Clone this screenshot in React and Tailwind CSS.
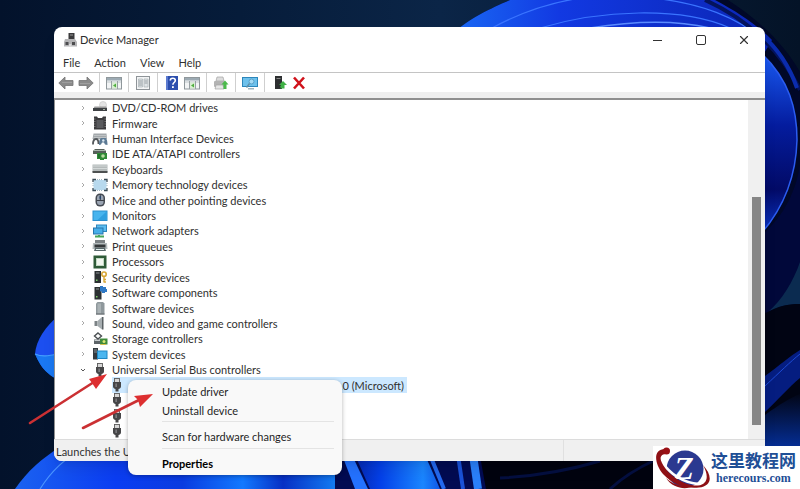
import { X } from 'lucide-react';

function cx(...classes) {
  return classes.filter(Boolean).join(' ');
}

function Svg({ w = 16, h = 14, className, children }) {
  return (
    <svg
      width={w}
      height={h}
      viewBox={`0 0 ${w} ${h}`}
      className={cx('shrink-0', className)}
      aria-hidden="true"
    >
      {children}
    </svg>
  );
}

/* ---------- tree icons ---------- */

const DiscIcon = () => (
  <Svg>
    <circle cx="11" cy="4" r="3.5" fill="#e4e4e4" stroke="#c4c4c4" strokeWidth=".6" />
    <path d="M2.5 5.500h12l.5 2H1.5z" fill="#9a9a9a" />
    <rect x="1" y="7" width="14" height="3" fill="#3e4144" />
    <rect x="11" y="8" width="2" height="1" fill="#a9b5a6" />
  </Svg>
);

const FirmwareIcon = () => (
  <Svg>
    <path d="M2 .5h3L6 2h4l1-1.500h3v13H2z" fill="#3b3b3d" />
    <rect x="4.500" y="4" width="7" height="8" fill="#5a5b5e" />
    <path d="M2 3h1.500M2 5.500h1.500M2 8h1.500M2 10.500h1.500M12.500 3H14M12.500 5.500H14M12.500 8H14M12.500 10.500H14" stroke="#8a8a8a" strokeWidth=".8" />
  </Svg>
);

const HidIcon = () => (
  <Svg>
    <path d="M1.500 1.500h13l.5 5.500H.5z" fill="#a3a8ab" />
    <path d="M2 3.500h12M1.500 5.500h13" stroke="#c6cacc" strokeWidth=".8" />
    <path d="M1 12.500c0-4 1-5.500 3-5.500s2.500 2 2.500 5" fill="none" stroke="#54585c" strokeWidth="1.800" />
    <path d="M7 13c0-4.500 1-7 2.500-7h3.500c1.500 0 2.500 2.500 2.500 7l-2.500-.5-1-2h-2l-1 2z" fill="#5c7a94" />
    <circle cx="11.300" cy="8.500" r="1.200" fill="#dbe8f2" />
  </Svg>
);

const IdeIcon = () => (
  <Svg>
    <path d="M1 4l2-2h9l2 2v3H1z" fill="#56605a" />
    <path d="M2 3.500h11" stroke="#a9b5ac" strokeWidth="1" />
    <path d="M5 6h10v6h-3v1H8v-1H5z" fill="#2f8a36" />
    <circle cx="11" cy="9" r="1.800" fill="#b9dba2" />
    <path d="M6 8h2M6 10h2" stroke="#175c22" strokeWidth="1" />
  </Svg>
);

const KeyboardIcon = () => (
  <Svg>
    <rect x=".5" y="2.500" width="15" height="7.500" fill="#b4baba" />
    <path d="M1 4h14M1 6.500h14" stroke="#d3d8d8" strokeWidth="1" />
    <rect x=".5" y="9" width="15" height="2" fill="#4d5050" />
  </Svg>
);

const MemoryIcon = () => (
  <Svg>
    <rect x="1.500" y="2" width="13" height="10" fill="#b7d9ee" />
    <path d="M1 4V1.500h3M12 1.500h3V4M15 10v2.500h-3M4 12.500H1V10" fill="none" stroke="#3c4d58" strokeWidth="1.300" />
    <path d="M5 1.500h6M5 12.500h6M1 5v4M15 5v4" stroke="#8aa7b8" strokeWidth=".8" strokeDasharray="1 1" />
  </Svg>
);

const MouseIcon = () => (
  <Svg>
    <rect x="3.500" y=".5" width="9.500" height="13" rx="4.500" fill="#454a52" />
    <rect x="5" y="2" width="6.500" height="10" rx="3" fill="#9aa4b2" />
    <path d="M8.300 1.500v6M5 7.500h7" stroke="#3b4048" strokeWidth="1" />
    <rect x="7.500" y="3" width="1.500" height="3" rx=".7" fill="#27456e" />
  </Svg>
);

const MonitorIcon = () => (
  <Svg>
    <rect x=".5" y="1.500" width="15" height="10.500" fill="#2b8fce" />
    <path d="M1.500 2.500h13V11h-13z" fill="#47b4ee" />
    <path d="M14.500 2.500V11h-9z" fill="#2f9fdf" />
  </Svg>
);

const NetworkIcon = () => (
  <Svg>
    <rect x="4" y=".5" width="11" height="7.500" fill="#2f86bd" />
    <rect x="5" y="1.500" width="9" height="5.500" fill="#5cbdf0" />
    <rect x="1" y="3.500" width="10.500" height="7" fill="#2675ab" />
    <rect x="2" y="4.500" width="8.500" height="5" fill="#47aee9" />
    <path d="M3 12.500h9M7 11v2" stroke="#46a65a" strokeWidth="2" />
  </Svg>
);

const PrinterIcon = () => (
  <Svg>
    <path d="M3 1h10v3H3z" fill="#7b8184" />
    <path d="M1 4h14l.5 6H.5z" fill="#b4bbbd" />
    <path d="M2.500 5.500h11v3h-11z" fill="#34383a" />
    <path d="M3 9h10l1 3H2z" fill="#59686b" />
    <path d="M4 10.500h8" stroke="#e6f2f2" strokeWidth="1" />
  </Svg>
);

const CpuIcon = () => (
  <Svg>
    <rect x="1.500" y=".5" width="13" height="13" fill="#2f5b38" />
    <rect x="4" y="3" width="8" height="8" fill="#c3d9c4" />
    <rect x="5" y="4" width="6" height="6" fill="#f2f7f0" />
  </Svg>
);

const SecurityIcon = () => (
  <Svg>
    <rect x="2.500" y="1" width="6.500" height="12" fill="#2c3032" />
    <rect x="4" y="9.500" width="1.500" height="1.500" fill="#7ecf68" />
    <path d="M4 3h3.500" stroke="#8b9093" strokeWidth="1" />
    <circle cx="12" cy="4.200" r="2.200" fill="none" stroke="#d8a634" strokeWidth="1.600" />
    <path d="M12 6v6.500M12 9.500h2M12 12h2" stroke="#d8a634" strokeWidth="1.400" />
  </Svg>
);

const ComponentIcon = () => (
  <Svg>
    <rect x="2.500" y="1" width="7" height="12.500" fill="#2c3032" />
    <rect x="4" y="10" width="1.500" height="1.500" fill="#7ecf68" />
    <path d="M4 3h3" stroke="#8b9093" strokeWidth="1" />
    <path d="M8 0h3v1h3v2h1v3h-2v1h-3V5.500H8z" fill="#2f79c6" />
  </Svg>
);

const SoftDeviceIcon = () => (
  <Svg>
    <path d="M4 2.500L5.500 1H11l1.500 1.500v11H4z" fill="#8f989c" />
    <path d="M5.500 2.500H9v10H5.500z" fill="#aab2b5" />
    <path d="M4 13h8.500" stroke="#62696c" strokeWidth="1" />
  </Svg>
);

const SoundIcon = () => (
  <Svg>
    <path d="M2.500 5h3v5h-3z" fill="#7c8386" />
    <path d="M5.500 5L10 1v12.500L5.500 10z" fill="#a6adb0" />
    <path d="M10 1h1.500v12.500H10z" fill="#5a6164" />
  </Svg>
);

const StorageIcon = () => (
  <Svg>
    <path d="M6 1l3.500 3L6 7 2.500 4z" fill="#fff" stroke="#4b5053" strokeWidth="1.400" />
    <path d="M2 7.500h7l2 2v2.500H2z" fill="#5d6468" />
    <path d="M2.500 8.500h6" stroke="#c8cdcf" strokeWidth="1" />
    <path d="M8 6.500h7.500v6H8z" fill="#3f8a3a" />
    <path d="M8.500 12.500h5.500" stroke="#d8c04a" strokeWidth="1" />
    <circle cx="12" cy="9.500" r="1.500" fill="#d6e36f" />
  </Svg>
);

const SystemIcon = () => (
  <Svg>
    <rect x="1" y="1" width="5" height="11.500" fill="#343a3f" />
    <path d="M2 3h3M2 5h3" stroke="#9ba3a8" strokeWidth=".8" />
    <rect x="5" y="3.500" width="10.500" height="8.500" fill="#1f87c4" />
    <rect x="6" y="4.500" width="8.500" height="6.500" fill="#4bb6ef" />
  </Svg>
);

const UsbIcon = () => (
  <Svg w={10}>
    <rect x="2.500" y=".5" width="5" height="4" fill="#d8d8d8" stroke="#5c5c5c" strokeWidth=".9" />
    <path d="M1 4h8v4.500c0 1.500-1.500 2.500-2.500 2.500v2.500h-3V11c-1 0-2.500-1-2.500-2.500z" fill="#464648" />
    <path d="M3.500 5.500h1.300v3.500H3.500z" fill="#8a8a8d" />
  </Svg>
);

/* ---------- toolbar icons ---------- */

const ArrowIcon = ({ flip }) => (
  <Svg className={flip ? 'rotate-180' : ''}>
    <path d="M.8 7L7 1v3.500h8v5H7V13z" fill="#8b8b8b" stroke="#757575" strokeWidth=".8" />
    <path d="M4 6.500h10" stroke="#9f9f9f" strokeWidth="1" />
  </Svg>
);

const PaneIcon = () => (
  <Svg>
    <rect x=".5" y="1.500" width="15" height="11.500" fill="#f2f4f5" stroke="#8f979b" />
    <rect x="1" y="2" width="14" height="2.500" fill="#9caab3" />
    <path d="M1 6h14" stroke="#c0c7cb" />
    <path d="M5.500 5v8M11.500 5v8" stroke="#98a0a4" />
    <rect x="6" y="6.500" width="5" height="6" fill="#d9efd2" />
    <path d="M10 7.500v4L7 9.500z" fill="#4fae3f" />
  </Svg>
);

const PropertiesIcon = () => (
  <Svg>
    <rect x="1.500" y=".5" width="13" height="13" fill="#f3f4f5" stroke="#8e9498" />
    <path d="M3.500 3h4v8h-4zM9 3h4v8H9z" fill="#dfe4e7" stroke="#a9b1b6" strokeWidth=".7" />
    <path d="M4 5h3M4 7h3M4 9h3M9.500 5h3M9.500 7h3" stroke="#868e93" strokeWidth=".8" />
  </Svg>
);

const HelpIcon = () => (
  <Svg>
    <rect x="2" y="0" width="12" height="14" fill="#2d4fae" />
    <rect x="2" y="0" width="2" height="14" fill="#5c7bd0" />
    <path d="M6.300 4.500c0-3 5-3 5 0 0 2-2.400 2-2.400 4.200" fill="none" stroke="#fff" strokeWidth="1.600" />
    <rect x="8" y="10.200" width="1.800" height="1.800" fill="#fff" />
  </Svg>
);

const ScanIcon = () => (
  <Svg>
    <path d="M4 1h6l1 4H3z" fill="#dcdcdc" stroke="#a4a4a4" strokeWidth=".7" />
    <rect x="1" y="5" width="11" height="6" rx="1" fill="#b3b3b3" />
    <path d="M3 9h7l1 4H2z" fill="#e6e6e6" stroke="#a4a4a4" strokeWidth=".7" />
    <path d="M12 4.500l3.500 4H13.500V13h-3V8.500H8.500z" fill="#4cba4c" />
  </Svg>
);

const RemoteIcon = () => (
  <Svg>
    <rect x="0" y="1" width="16" height="10" fill="#2c86bb" />
    <rect x="1" y="2" width="14" height="8" fill="#6dc1ec" />
    <circle cx="9.500" cy="5.500" r="2.500" fill="#a3daf5" stroke="#58a0c8" />
    <path d="M7.500 7.500l-3 4" stroke="#5d8fa8" strokeWidth="1.400" />
    <path d="M6 12.800h6" stroke="#8ba3ae" strokeWidth="1.200" />
  </Svg>
);

const UpdateIcon = () => (
  <Svg>
    <rect x="4" y="0" width="7" height="13" fill="#2d2f31" />
    <path d="M5.500 2.500h4" stroke="#888" />
    <path d="M12 5l4 4h-2.500v3.500h-4V11H9l1-2H8z" fill="#3fb045" />
  </Svg>
);

const RemoveIcon = () => (
  <Svg>
    <path d="M3 1.500l10 11M13 1.500L3 12.500" stroke="#d0121b" strokeWidth="2.600" />
  </Svg>
);

const DeviceManagerIcon = () => (
  <Svg>
    <rect x="6.500" y="0" width="6" height="8" fill="#3a3a3c" />
    <path d="M8 2h3" stroke="#999" />
    <path d="M3 6h10l2 3v4.500H2V9z" fill="#b4b4b6" />
    <rect x="3.500" y="9" width="3" height="3" fill="#4c4c4e" />
    <rect x="10" y="9" width="3" height="3" fill="#4c4c4e" />
    <path d="M7 12h2.500" stroke="#fff" />
  </Svg>
);

const CATEGORIES = [
  { label: 'DVD/CD-ROM drives', icon: DiscIcon },
  { label: 'Firmware', icon: FirmwareIcon },
  { label: 'Human Interface Devices', icon: HidIcon },
  { label: 'IDE ATA/ATAPI controllers', icon: IdeIcon },
  { label: 'Keyboards', icon: KeyboardIcon },
  { label: 'Memory technology devices', icon: MemoryIcon },
  { label: 'Mice and other pointing devices', icon: MouseIcon },
  { label: 'Monitors', icon: MonitorIcon },
  { label: 'Network adapters', icon: NetworkIcon },
  { label: 'Print queues', icon: PrinterIcon },
  { label: 'Processors', icon: CpuIcon },
  { label: 'Security devices', icon: SecurityIcon },
  { label: 'Software components', icon: ComponentIcon },
  { label: 'Software devices', icon: SoftDeviceIcon },
  { label: 'Sound, video and game controllers', icon: SoundIcon },
  { label: 'Storage controllers', icon: StorageIcon },
  { label: 'System devices', icon: SystemIcon },
  { label: 'Universal Serial Bus controllers', icon: UsbIcon, open: true },
];

const USB_DEVICES = [
  { key: 'host', label: '.0 (Microsoft)', selected: true },
  { key: 'hub-1' },
  { key: 'hub-2' },
  { key: 'hub-3' },
];

const TOOLBAR = [
  [
    { label: 'Back', icon: <ArrowIcon /> },
    { label: 'Forward', icon: <ArrowIcon flip /> },
  ],
  [{ label: 'Show console tree', icon: <PaneIcon /> }],
  [{ label: 'Properties', icon: <PropertiesIcon /> }],
  [
    { label: 'Help', icon: <HelpIcon /> },
    { label: 'Show action pane', icon: <PaneIcon /> },
  ],
  [{ label: 'Print', icon: <ScanIcon /> }],
  [{ label: 'Scan for hardware changes', icon: <RemoteIcon /> }],
  [
    { label: 'Update driver', icon: <UpdateIcon /> },
    { label: 'Uninstall device', icon: <RemoveIcon /> },
  ],
];

function Wallpaper() {
  return (
    <svg
      viewBox="0 0 800 489"
      preserveAspectRatio="xMidYMid slice"
      className="absolute inset-0 h-full w-full"
      aria-hidden="true"
    >
      <defs>
        <linearGradient id="night" x1="0" y1="0" x2="1" y2="0">
          <stop offset="0" stopColor="#03122b" />
          <stop offset=".3" stopColor="#061c3a" />
          <stop offset=".55" stopColor="#0b2547" />
          <stop offset="1" stopColor="#041327" />
        </linearGradient>
        <linearGradient id="crown" x1="0" y1="0" x2="1" y2="0">
          <stop offset="0" stopColor="#1a6cf5" />
          <stop offset=".35" stopColor="#1239e2" />
          <stop offset="1" stopColor="#0b25b4" />
        </linearGradient>
        <linearGradient id="side" x1="0" y1="0" x2="0" y2="1">
          <stop offset="0" stopColor="#1a5cf5" />
          <stop offset=".4" stopColor="#041c9e" />
          <stop offset=".75" stopColor="#020a66" />
          <stop offset="1" stopColor="#0b35c8" />
        </linearGradient>
        <linearGradient id="floor" x1="0" y1="0" x2="1" y2="0">
          <stop offset="0" stopColor="#1b62f0" />
          <stop offset=".3" stopColor="#0b3df2" />
          <stop offset=".5" stopColor="#0a3be0" />
          <stop offset=".68" stopColor="#1279ff" />
          <stop offset=".8" stopColor="#072fc4" />
          <stop offset="1" stopColor="#1590ff" />
        </linearGradient>
        <linearGradient id="glow" x1="0" y1="0" x2="1" y2="0">
          <stop offset="0" stopColor="#0528b0" />
          <stop offset=".3" stopColor="#0440e8" />
          <stop offset=".8" stopColor="#1a86ff" />
          <stop offset="1" stopColor="#1057e8" />
        </linearGradient>
        <linearGradient id="corner" x1="0" y1="0" x2="0" y2="1">
          <stop offset="0" stopColor="#020617" />
          <stop offset="1" stopColor="#05309c" />
        </linearGradient>
      </defs>
      <rect width="800" height="489" fill="url(#night)" />

      {/* top petals */}
      <path d="M445 40C470 17 490 9 510 0H728C762 22 785 46 800 72V320H700V60z" fill="#010828" />
      <path d="M445 40C470 17 490 9 510 0H715C738 12 758 26 772 40L760 60H700z" fill="url(#crown)" />
      <path d="M492 28C540 2 590-8 640-3C700 1 740 18 770 45" fill="none" stroke="#3a74ff" strokeWidth="1.200" />
      <path d="M540 28C600 10 680 6 730 28" fill="none" stroke="#3a74ff" strokeWidth="1.200" />
      <path d="M590 28C640 20 680 21 710 28" fill="none" stroke="#5b8cff" strokeWidth="1.500" />
      <path d="M705 0C745 18 780 48 800 90" fill="none" stroke="#04135c" strokeWidth="4" />
      <path d="M756 30C774 44 788 62 797 88" fill="none" stroke="#0b2cae" strokeWidth="4" />

      {/* right petal */}
      <path d="M760 52C790 80 797 110 797 140C796 180 782 210 760 235z" fill="url(#side)" />
      <path d="M760 52C790 80 797 110 797 140C796 180 782 210 760 235" fill="none" stroke="#2b5cf0" strokeWidth="1.500" />
      <path d="M762 235C785 215 796 190 800 165V270C790 290 780 302 766 316z" fill="#01083a" />
      <path d="M768 312C782 300 793 282 800 262V304C788 304 778 306 768 312z" fill="#0b2b50" />
      <path d="M760 316C778 306 788 304 800 304V489H640V455h120z" fill="#010413" />
      <path d="M765 376C780 365 790 356 800 350V378C788 388 778 400 765 412z" fill="#051d80" />
      <path d="M765 386C780 372 790 362 800 354" fill="none" stroke="#1d4bd6" strokeWidth="1" />
      <path d="M765 415C780 404 790 398 800 394V450H765z" fill="url(#corner)" />

      {/* left petal */}
      <path d="M58 316C46 326 36 340 35 354C42 370 48 374 58 380z" fill="#1c4ff0" />
      <path d="M35 354C42 357 48 356 58 354V380C48 374 42 370 35 354z" fill="#1a78f2" />
      <path d="M35 354C42 357 48 356 58 354" fill="none" stroke="#45a0ff" strokeWidth="1.200" />

      {/* bottom petals */}
      <path d="M15 489C28 470 42 459 58 448H350V489z" fill="url(#floor)" />
      <path d="M40 489C52 470 64 460 80 450" fill="none" stroke="#4b95ff" strokeWidth="1.200" />
      <path d="M335 455H500V489H335z" fill="#020b52" />
      <path d="M355 455H425L440 489H370z" fill="url(#glow)" />
      <path d="M342 455H352L368 489H355z" fill="#2472ff" />
      <path d="M430 455L444 489" stroke="#2368ee" strokeWidth="4" />
      <path d="M458 455L463 489" stroke="#1a52d8" strokeWidth="4" />
      <path d="M473 455L478 489" stroke="#2a80fa" strokeWidth="8" />
      <path d="M480 455H700V489H486C484 478 482 468 480 455z" fill="#01030f" />
      <path d="M610 489C625 475 640 467 655 460M500 478C540 476 570 470 600 461" fill="none" stroke="#040f40" strokeWidth="3" />
    </svg>
  );
}

function TitleBar() {
  return (
    <header className="flex h-[26px] items-center pl-2">
      <DeviceManagerIcon />
      <h1 className="flex-1 pl-0.5 leading-4 text-[#2b2b2b]">Device Manager</h1>
      <button type="button" aria-label="Minimize" className="flex w-[43px] justify-center">
        <span className="h-px w-[9px] bg-[#333]" />
      </button>
      <button type="button" aria-label="Maximize" className="flex w-[43px] justify-center">
        <span className="size-[10px] rounded-xs border border-[#333]" />
      </button>
      <button type="button" aria-label="Close" className="flex w-[43px] justify-center text-[#333]">
        <X size={14} strokeWidth={2} />
      </button>
    </header>
  );
}

function MenuBar() {
  return (
    <nav className="flex h-[19px] items-center gap-[14px] px-[9px]" aria-label="Menu">
      {['File', 'Action', 'View', 'Help'].map((item) => (
        <button key={item} type="button" className="leading-4">
          {item}
        </button>
      ))}
    </nav>
  );
}

function Toolbar() {
  return (
    <div
      role="toolbar"
      className="flex h-5 divide-x divide-[#cfcfcf] border-t border-[#c4c4c4] bg-white pl-px"
    >
      {TOOLBAR.map((group) => (
        <div
          key={group[0].label}
          className="flex items-center gap-1 px-1.5 first:pr-[5px] first:pl-[3px]"
        >
          {group.map((tool) => (
            <button key={tool.label} type="button" aria-label={tool.label}>
              {tool.icon}
            </button>
          ))}
        </div>
      ))}
    </div>
  );
}

function Chevron({ open }) {
  return (
    <Svg w={6} h={6} className={open ? 'rotate-90' : ''}>
      <path
        d="M2 1l2 2-2 2"
        fill="none"
        stroke={open ? '#555' : '#a8a8a8'}
        strokeWidth="1"
      />
    </Svg>
  );
}

function CategoryRow({ item }) {
  const Icon = item.icon;

  return (
    <li role="treeitem" aria-expanded={Boolean(item.open)} className="flex min-h-0 items-center pl-[25px]">
      <button type="button" aria-label={`Toggle ${item.label}`}>
        <Chevron open={item.open} />
      </button>
      <button type="button" className="ml-[6px] flex items-center gap-1 leading-[15px]">
        <span className="flex w-4 justify-center">
          <Icon />
        </span>
        <span>{item.label}</span>
      </button>
    </li>
  );
}

function DeviceRow({ device }) {
  return (
    <li role="treeitem" aria-selected={Boolean(device.selected)} className="flex min-h-0 pl-[57px]">
      <button
        type="button"
        aria-label={device.label ? undefined : 'USB device'}
        className={cx(
          'flex w-[295px] items-center justify-between pr-[3px] leading-[15px]',
          device.selected && 'bg-[#cce8ff]',
        )}
      >
        <UsbIcon />
        <span>{device.label}</span>
      </button>
    </li>
  );
}

function ContextMenu() {
  return (
    <div
      role="menu"
      className="absolute top-[353px] left-[74px] flex w-[214px] flex-col rounded-lg bg-[#f9f9f9] pt-[3px] pr-2 pb-[2px] pl-[34px] text-[#1f1f1f] shadow-[0_1px_4px_rgba(0,0,0,0.3)]"
    >
      <button type="button" role="menuitem" className="h-[19px] text-left">
        Update driver
      </button>
      <button type="button" role="menuitem" className="h-[19px] text-left">
        Uninstall device
      </button>
      <hr className="border-[#e4e4e4]" />
      <button type="button" role="menuitem" className="h-[26px] pt-1 text-left">
        Scan for hardware changes
      </button>
      <hr className="border-[#e4e4e4]" />
      <button type="button" role="menuitem" className="h-6 pt-1.5 text-left font-bold text-black">
        Properties
      </button>
    </div>
  );
}

function Pointers() {
  return (
    <svg
      width="130"
      height="60"
      viewBox="0 0 130 60"
      className="absolute top-[344px] left-[-28px]"
      aria-hidden="true"
    >
      <g stroke="#cb3033" strokeWidth="2.600" strokeLinecap="round" fill="#dd2f30">
        <path d="M4 52L68 11" />
        <path d="M81 3L63 8L66 12L70 18z" stroke="none" />
        <path d="M57 57L113 29" />
        <path d="M127 23L108 25L112 29L114 36z" stroke="none" />
      </g>
    </svg>
  );
}

function Watermark() {
  return (
    <a
      href="#herecours"
      className="absolute right-0 bottom-0 flex h-[43px] w-[147px] items-center bg-white"
    >
      <Svg w={58} h={43}>
        <circle cx="32" cy="23" r="18.500" fill="#2b3990" />
        <text
          x="31"
          y="33"
          textAnchor="middle"
          fill="#fff"
          className="font-['Liberation_Serif',serif] text-[32px] font-bold italic"
        >
          Z
        </text>
        <path d="M10 17C16 27 30 37 46 38" fill="none" stroke="#fff" strokeWidth="2.500" />
        <path d="M13 32C20 39 30 41 40 40C34 44 20 43 13 32z" fill="#8e1015" />
        <path
          d="M12 3C0 3 1 17 10 28C20 39 34 43 46 41.500C59 40 60 30 50 19C56 30 55 38 45 39.500C31 40 15 29 9 17C6 11 8 8 14 8z"
          fill="#8e1015"
        />
        <circle cx="13.500" cy="5" r="3.500" fill="#9a1015" />
      </Svg>
      <span className="flex flex-col items-center text-[#1f4f96]">
        <span className="font-['Noto_Sans_CJK_SC',sans-serif] text-[17px] leading-5 font-bold">
          这里教程网
        </span>
        <span className="font-['Liberation_Serif',serif] text-[12px] leading-4 font-bold">
          herecours.com
        </span>
      </span>
    </a>
  );
}

export default function App() {
  return (
    <main className="relative min-h-screen overflow-hidden bg-[#03122b] pt-[27px] pr-[35px] pb-7 pl-[54px] font-['Lato','Open_Sans',sans-serif] text-[11px] text-[#303030]">
      <Wallpaper />

      <section className="relative rounded-lg bg-white shadow-lg" aria-label="Device Manager">
        <TitleBar />
        <MenuBar />
        <Toolbar />
        <div className="h-[6px] bg-[#efefef]" />

        <div className="flex border-t-2 border-l border-[#8f8f8f]">
          <ul role="tree" className="grid h-[339px] flex-1 auto-rows-fr bg-white">
            {CATEGORIES.map((item) => (
              <CategoryRow key={item.label} item={item} />
            ))}
            {USB_DEVICES.map((device) => (
              <DeviceRow key={device.key} device={device} />
            ))}
          </ul>
          <div className="w-[17px] bg-[#f0f0f0] px-1 pt-[97px]">
            <div className="h-[228px] bg-[#868686]" />
          </div>
        </div>

        <footer className="flex h-[22px] rounded-b-lg border-t border-[#dcdcdc] bg-[#f0f0f0]">
          <p className="flex-1 border-r border-[#e0e0e0] pt-1 pl-0.5 leading-4">
            Launches the U
          </p>
          <div className="w-[201px]" />
        </footer>

        <ContextMenu />
        <Pointers />
      </section>

      <Watermark />
    </main>
  );
}
